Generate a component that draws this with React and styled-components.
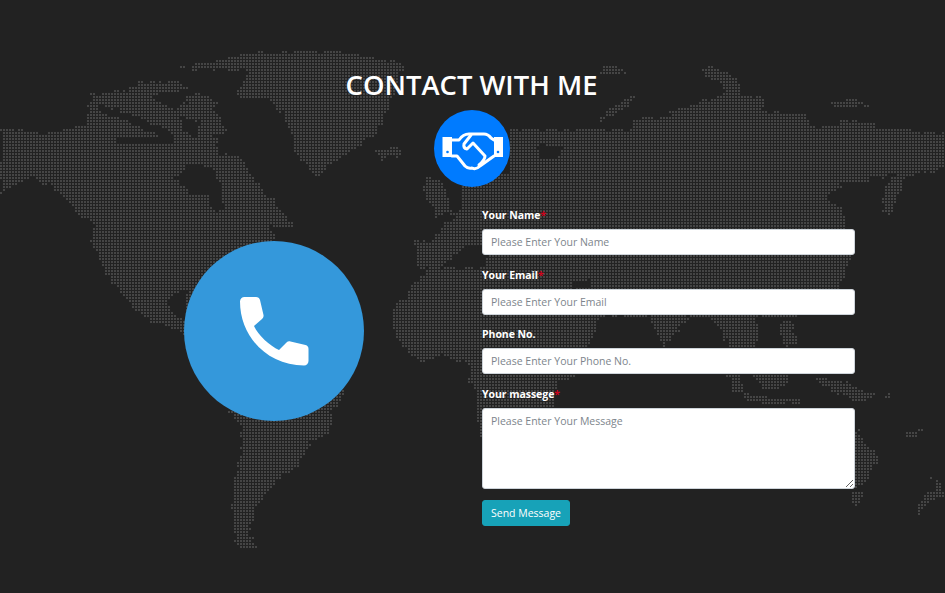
import React from 'react';
import styled, { createGlobalStyle } from 'styled-components';

const GlobalStyle = createGlobalStyle`
  html, body {
    margin: 0;
    padding: 0;
    background: #222;
  }
  * {
    box-sizing: border-box;
  }
`;

const LAND = [
  // north america
  '0,128 53,132 85,124 90,95 125,90 135,83 175,80 215,100 213,110 233,147 257,183 283,210 293,227 273,227 262,222 277,237 265,250 245,262 245,300 230,320 200,335 177,330 150,320 133,307 110,280 90,240 93,223 77,213 50,183 27,177 0,193',
  // greenland
  '177,67 240,53 335,50 405,63 387,107 377,130 327,167 315,177 293,150 287,127 283,113 267,100 233,93 250,70',
  '373,148 398,147 400,156 380,158',
  // south america
  '227,410 240,423 243,443 237,457 233,487 230,510 233,540 240,547 257,545 248,530 257,507 262,497 280,477 300,460 310,440 327,433 333,407 343,393 300,340 250,360',
  // uk and ireland
  '423,178 440,178 447,195 452,212 432,216 436,204 424,200',
  // eurasia and africa
  '510,127 590,130 628,130 633,118 667,117 670,110 687,105 710,98 723,93 723,83 703,77 703,68 713,65 727,73 740,83 743,93 763,98 763,110 803,113 810,125 833,125 843,118 863,122 893,128 920,130 945,132 945,167 900,177 893,173 880,177 840,183 827,198 840,207 847,228 852,254 835,290 800,316 757,316 757,347 730,347 707,316 687,316 662,347 648,316 600,314 590,340 575,375 555,382 555,405 530,430 500,450 490,445 480,437 475,417 475,390 468,380 467,362 440,355 420,362 407,350 393,333 393,307 413,285 428,268 415,265 415,242 432,238 445,222 458,205 463,182 507,172',
  // islands, south east asia
  '780,320 790,320 797,343 785,347 778,335',
  '727,373 738,373 742,392 733,390',
  '753,373 790,373 785,388 760,388',
  '740,392 770,396 800,398 800,403 765,402 745,399',
  '813,375 845,382 875,393 860,403 845,396 820,385',
  '885,393 890,393 890,397 885,397',
  // japan, kamchatka
  '882,200 895,200 893,208 887,213 882,210',
  '893,175 903,173 900,190 887,213 882,207 883,187',
  // svalbard, novaya zemlya
  '600,65 612,64 625,72 612,75 600,75',
  '600,115 625,97 637,93 637,98 615,112 600,120',
  '830,100 855,98 868,105 850,107 835,107',
  // australia and around
  '800,425 855,427 877,457 865,483 855,487 820,478 800,470',
  '850,490 862,490 862,503 852,503',
  '905,428 912,430 922,427 918,436 908,437',
  '930,473 943,487 943,495 928,500 917,515 913,510 925,493 935,487',
];

const SEA = [
  '173,177 190,163 213,168 222,190 223,207 215,212 208,195 190,192',
  '97,103 133,113 172,133 175,142 130,122 97,110',
  '117,137 173,137 173,143 117,143',
  '150,95 200,85 175,110 160,105',
  '180,117 197,120 195,137 183,130',
  '213,133 238,135 240,152 220,155',
  '178,68 250,72 250,76 178,72',
  '170,292 185,290 185,318 170,312 166,300',
  '430,265 447,262 470,243 486,243 484,267 460,268',
  '537,145 563,145 555,158 540,158',
  '570,280 590,280 586,288 573,288',
];

const parse = (list) => list.map((s) => s.split(' ').map((p) => p.split(',').map(Number)));
const landPolys = parse(LAND);
const seaPolys = parse(SEA);

function inside(x, y, poly) {
  let hit = false;
  for (let i = 0, j = poly.length - 1; i < poly.length; j = i++) {
    const [xi, yi] = poly[i];
    const [xj, yj] = poly[j];
    if ((yi > y) !== (yj > y) && x < ((xj - xi) * (y - yi)) / (yj - yi) + xi) hit = !hit;
  }
  return hit;
}

// small repeatable wobble so the coast comes out ragged, like the dotted map
const wobble = (x, y) => {
  const n = Math.sin(Math.floor(x / 6) * 12.9898 + Math.floor(y / 6) * 78.233) * 43758.5453;
  return (n - Math.floor(n) - 0.5) * 4;
};

function buildDots() {
  let d = '';
  for (let y = 0; y < 593; y += 3) {
    for (let x = 0; x < 945; x += 3) {
      const wx = x + wobble(x, y);
      const wy = y + wobble(y, x);
      if (landPolys.some((p) => inside(wx, wy, p)) && !seaPolys.some((p) => inside(wx, wy, p))) {
        d += `M${x} ${y}h2v2h-2z`;
      }
    }
  }
  return d;
}

const DOTS = buildDots();

const Page = styled.div`
  position: relative;
  width: 945px;
  height: 593px;
  overflow: hidden;
  background: #222;
  font-family: "Open Sans", "Noto Sans", sans-serif;
`;

const WorldMap = styled.svg`
  position: absolute;
  top: 0;
  left: 0;
`;

const Content = styled.div`
  position: relative;
  padding-top: 66px;
`;

const Title = styled.h2`
  margin: 0;
  height: 38px;
  padding-right: 2px;
  font-size: 27.4px;
  line-height: 38px;
  font-weight: 600;
  color: #fff;
  text-align: center;
`;

const Badge = styled.div`
  display: flex;
  align-items: center;
  justify-content: center;
  width: 76px;
  height: 77px;
  margin: 6px auto 0 434px;
  border-radius: 50%;
  background: #007bff;
`;

const Row = styled.div`
  display: flex;
  gap: 118px;
  padding: 19px 0 0 184px;
`;

const PhoneCircle = styled.div`
  display: flex;
  flex: none;
  align-items: center;
  justify-content: center;
  width: 180px;
  height: 180px;
  margin-top: 35px;
  border-radius: 50%;
  background: #3498db;
`;

const Form = styled.form`
  display: flex;
  flex-direction: column;
  width: 373px;
`;

const Field = styled.div`
  display: flex;
  flex-direction: column;
  margin-bottom: 10.5px;
`;

const Label = styled.label`
  height: 23px;
  padding-top: 1px;
  font-size: 10.5px;
  line-height: 17px;
  font-weight: 700;
  letter-spacing: -0.05px;
  color: #fff;
`;

const Star = styled.span`
  color: #d0021b;
`;

const Input = styled.input`
  width: 100%;
  height: 26px;
  padding: 0 8px;
  border: 1px solid #ced4da;
  border-radius: 3px;
  background: #fff;
  font-family: inherit;
  font-size: 10.5px;
  color: #495057;
  &::placeholder {
    color: #7d858c;
    opacity: 1;
  }
`;

const TextArea = styled(Input).attrs({ as: 'textarea' })`
  display: block;
  height: 81px;
  padding: 5px 8px;
  resize: vertical;
`;

const SendButton = styled.button`
  align-self: flex-start;
  width: 88px;
  height: 26px;
  margin-top: 1px;
  padding: 0;
  border: 1px solid #17a2b8;
  border-radius: 3px;
  background: #17a2b8;
  font-family: inherit;
  font-size: 10.5px;
  color: #fff;
`;

const fields = [
  { id: 'name', label: 'Your Name', placeholder: 'Please Enter Your Name', required: true },
  { id: 'email', label: 'Your Email', placeholder: 'Please Enter Your Email', required: true },
  { id: 'phone', label: 'Phone No.', placeholder: 'Please Enter Your Phone No.' },
];

function HandshakeIcon() {
  return (
    <svg width="75" height="50" viewBox="0 0 75 50" fill="none" stroke="#fff" strokeWidth="3" strokeLinecap="round" strokeLinejoin="round">
      <path d="M17 16H24Q28 10 34 10H49Q53 10 56 14L59 16" />
      <path d="M36 11L29 20Q28 24 32 25L38 19L50 32Q50 36 44 41" />
      <path d="M17 32H22L30 42Q33 45 37 44Q41 46 45 42L59 32" />
      <rect x="7.500" y="13" width="9.500" height="20" fill="#fff" stroke="none" />
      <rect x="59" y="13" width="9" height="20" fill="#fff" stroke="none" />
      <circle cx="12.500" cy="28" r="1.300" fill="#007bff" stroke="none" />
      <circle cx="63" cy="28" r="1.300" fill="#007bff" stroke="none" />
    </svg>
  );
}

function PhoneIcon() {
  return (
    <svg width="69" height="69" viewBox="0 0 69 69" fill="#fff">
      <path d="M0 4.5C0 2 2 0 4.5 0H16C18 0 19.5 1 20 3L23.5 18C23.8 19.5 23.2 20.8 22 22L14 29C18 38 30 49 39 53L46.500 45.500C47.500 44.500 49 44 50.500 44.500L65.500 48C67.500 48.500 68.500 50 68.500 52V64C68.500 66.500 66.500 68.500 64 68.500C28 68.500 0 40 0 4.500Z" />
    </svg>
  );
}

function App() {
  return (
    <Page>
      <GlobalStyle />
      <WorldMap width="945" height="593" viewBox="0 0 945 593" shapeRendering="crispEdges">
        <path d={DOTS} fill="#454545" />
      </WorldMap>
      <Content>
        <Title>CONTACT WITH ME</Title>
        <Badge>
          <HandshakeIcon />
        </Badge>
        <Row>
          <PhoneCircle>
            <PhoneIcon />
          </PhoneCircle>
          <Form onSubmit={(e) => e.preventDefault()}>
            {fields.map((f) => (
              <Field key={f.id}>
                <Label htmlFor={f.id}>{f.label}{f.required && <Star>*</Star>}</Label>
                <Input id={f.id} type="text" placeholder={f.placeholder} />
              </Field>
            ))}
            <Field>
              <Label htmlFor="message">Your massege<Star>*</Star></Label>
              <TextArea id="message" placeholder="Please Enter Your Message" />
            </Field>
            <SendButton type="submit">Send Message</SendButton>
          </Form>
        </Row>
      </Content>
    </Page>
  );
}

export default App;
